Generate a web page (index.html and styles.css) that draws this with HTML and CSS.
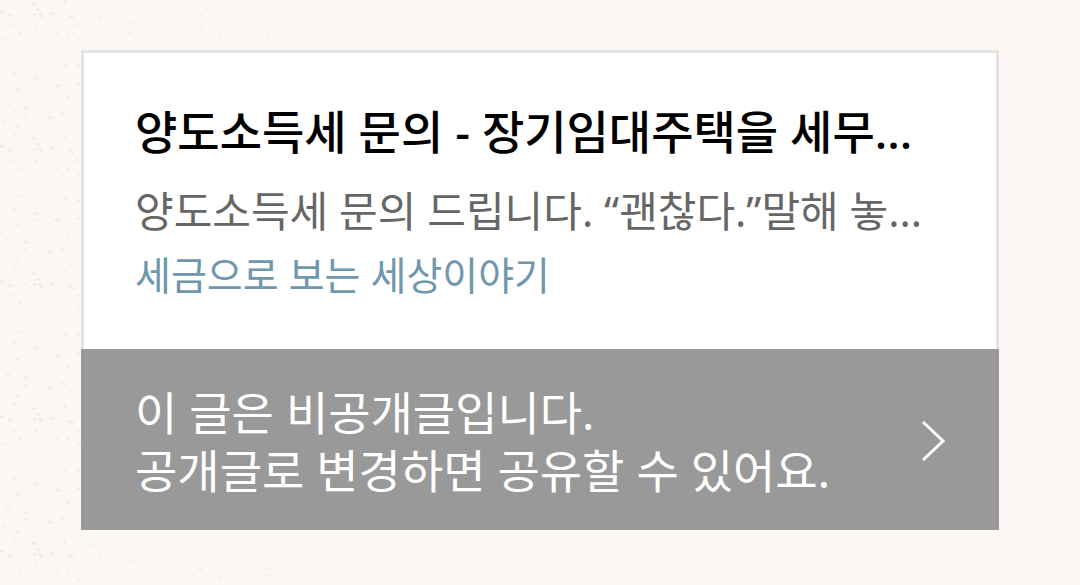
FILE: index.html
```html
<!DOCTYPE html>
<html lang="ko">
<head>
<meta charset="utf-8">
<meta name="viewport" content="width=device-width, initial-scale=1">
<title>양도소득세 문의</title>
<link rel="stylesheet" href="styles.css">
</head>
<body>
<svg class="texture" aria-hidden="true">
  <defs>
    <pattern id="grain" width="320" height="135" patternUnits="userSpaceOnUse">
      <g class="grain-warm">
        <path d="M0 11l3 1M32 3l4 1M37 9l2 1M39 14l2 1M64 0l1 2M78 65l1 1M78 83l1 1M200 29h1"/>
      </g>
      <g class="grain-grey">
        <path d="M9 15l3 1M24 14h1M34 14l1 1M41 16l1 1M51 13l2 1M69 16l4 2M13 25l1 1M20 33l1 1M36 26h1M56 33l1 1M67 34h1M77 25l1 1M79 39l1 1M5 39h1M21 61l1 1M14 73l2 1M36 78l2 1M37 85h1M55 85l4 1M64 64l2 1M17 89l2 1M67 96l1 2M7 104l2 1M25 107l2 1M25 115h1M49 117l2 1M62 113l3 2M5 121v1M17 126l1 1M14 134l3 1M64 0v1"/>
      </g>
      <g class="grain-faint">
        <path d="M87 4l4 1M108 8h1M99 17l2 1M105 16l2 1M129 4l2 1M132 21l2 1M128 24h1M129 33l2 1M137 34h2M160 1l2 1M168 15l2 1M199 14l2 1M206 9l1 1M193 36h1M219 37l2 1M226 27l1 1M247 23l2 1M267 35l2 1M265 29h2M272 8l2 1M234 18h1M240 42h1M159 22h2"/>
      </g>
    </pattern>
  </defs>
  <rect width="320" height="100%" fill="url(#grain)"/>
</svg>
<main class="page">
  <article class="card">
    <div class="preview">
      <h1 class="title">양도소득세 문의 - 장기임대주택을 세무...</h1>
      <p class="summary">양도소득세 문의 드립니다. “괜찮다.”말해 놓...</p>
      <a class="source" href="#">세금으로 보는 세상이야기</a>
    </div>
    <button class="notice" type="button">
      <span class="message">이 글은 비공개글입니다.<br>공개글로 변경하면 공유할 수 있어요.</span>
      <svg class="chevron" viewBox="0 0 28 44" aria-hidden="true"><path d="M3 3 L23 22 L3 41"/></svg>
    </button>
  </article>
</main>
</body>
</html>
```
FILE: styles.css
```css
* { box-sizing: border-box; }
body {
  margin: 0;
  background: #fcf7f4;
  font-family: "Noto Sans", "Noto Sans CJK KR", sans-serif;
}
.texture {
  position: absolute;
  inset: 0;
  z-index: -1;
  width: 100%;
  height: 100%;
  fill: none;
  stroke-width: 2;
  stroke-linecap: round;
}
.grain-warm { stroke: #f7e7e3; }
.grain-grey { stroke: #f2ebe8; }
.grain-faint { stroke: #f6f0ed; }
.page { padding: 50px 81px 55px; }
.card { background: #fff; }
.preview {
  padding: 48px 50px 44px 51px;
  border: 3px solid #e4e4e4;
  border-bottom: 0;
}
.title, .summary { margin: 0; white-space: nowrap; }
.title {
  font-size: 46px;
  line-height: 60px;
  font-weight: 500;
  color: #000;
}
.summary {
  margin-top: 20px;
  font-size: 42px;
  line-height: 60px;
  color: #666;
}
.source {
  display: block;
  margin-top: 4px;
  font-size: 39px;
  line-height: 60px;
  color: #6f97ae;
  text-decoration: none;
}
.notice {
  display: flex;
  width: 100%;
  align-items: center;
  justify-content: space-between;
  padding: 34px 51px 31px 54px;
  border: 0;
  background: #999;
  color: #fff;
  font: inherit;
  text-align: left;
}
.message { font-size: 46px; line-height: 58px; }
.chevron {
  width: 28px;
  height: 44px;
  fill: none;
  stroke: #fff;
  stroke-width: 3;
}
```
